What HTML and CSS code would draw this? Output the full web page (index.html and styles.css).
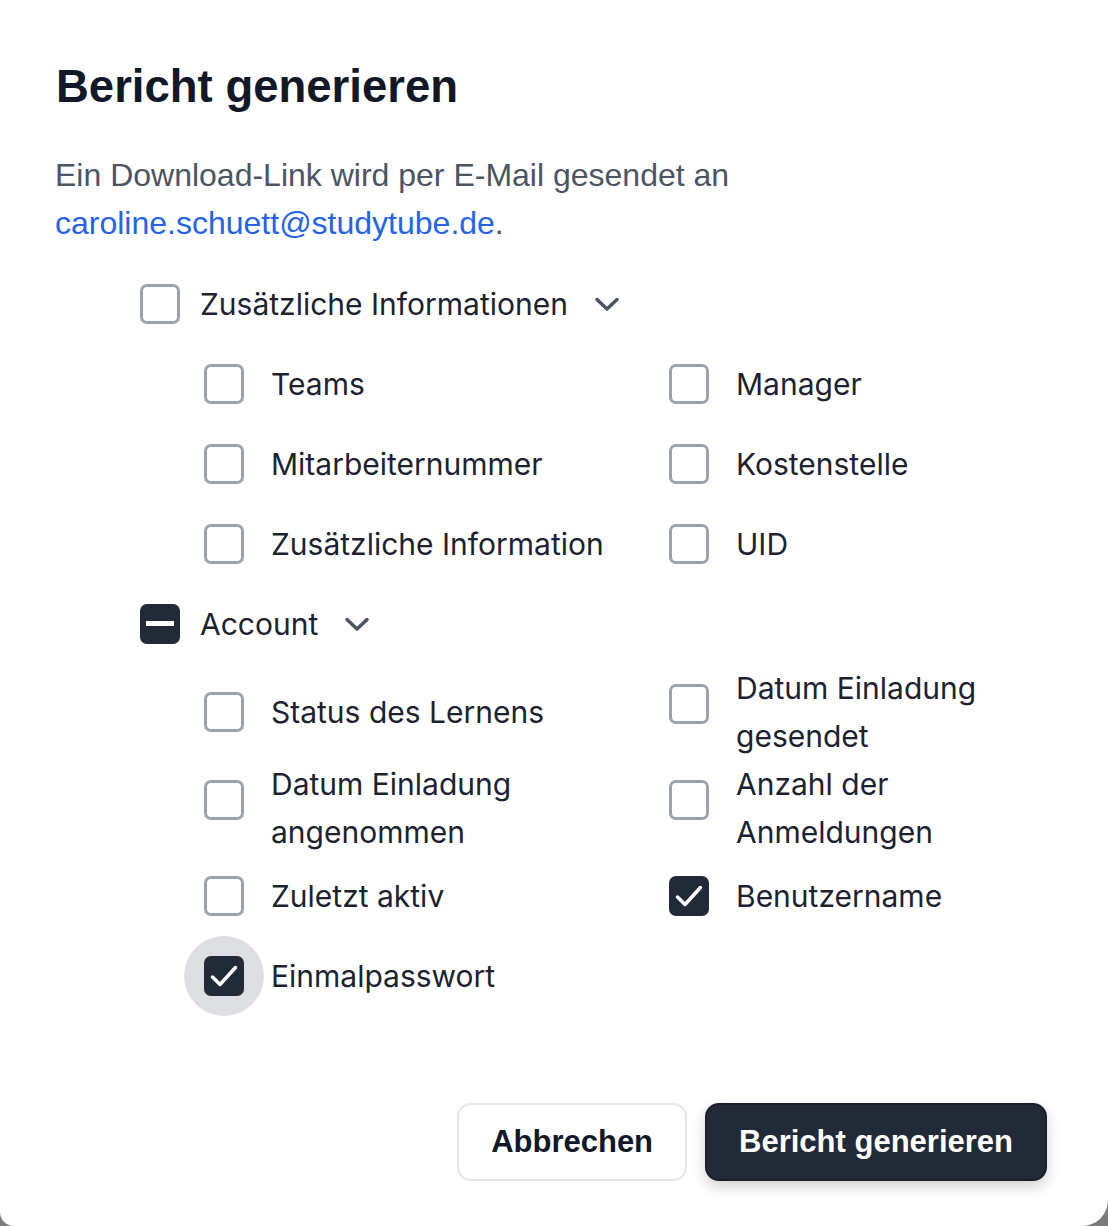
FILE: index.html
```html
<!DOCTYPE html>
<html lang="de">
<head>
    <meta charset="UTF-8">
    <meta name="viewport" content="width=device-width, initial-scale=1.0">
    <title>Bericht generieren</title>
    <link rel="stylesheet" href="styles.css">
</head>
<body>
    <div class="modal">
        <h2 class="title">Bericht generieren</h2>
        <p class="desc">Ein Download-Link wird per E-Mail gesendet an <a class="mail" href="#">caroline.schuett@studytube.de</a>.</p>

        <div class="groups">
            <!-- Zusätzliche Informationen -->
            <div class="group-head">
                <span class="cb-wrap"><span class="cb"></span></span>
                <span class="label">Zusätzliche Informationen
                    <svg class="chevron" width="26" height="16" viewBox="0 0 26 16"><path d="M3 3.5l10 9.5 10-9.5" fill="none" stroke="currentColor" stroke-width="3.5" stroke-linecap="round" stroke-linejoin="round"/></svg>
                </span>
            </div>
            <div class="items">
                <div class="item"><span class="cb-wrap"><span class="cb"></span></span><span class="label">Teams</span></div>
                <div class="item"><span class="cb-wrap"><span class="cb"></span></span><span class="label">Manager</span></div>
                <div class="item"><span class="cb-wrap"><span class="cb"></span></span><span class="label">Mitarbeiternummer</span></div>
                <div class="item"><span class="cb-wrap"><span class="cb"></span></span><span class="label">Kostenstelle</span></div>
                <div class="item"><span class="cb-wrap"><span class="cb"></span></span><span class="label">Zusätzliche Information</span></div>
                <div class="item"><span class="cb-wrap"><span class="cb"></span></span><span class="label">UID</span></div>
            </div>

            <!-- Account -->
            <div class="group-head">
                <span class="cb-wrap"><span class="cb mixed"></span></span>
                <span class="label">Account
                    <svg class="chevron" width="26" height="16" viewBox="0 0 26 16"><path d="M3 3.5l10 9.5 10-9.5" fill="none" stroke="currentColor" stroke-width="3.5" stroke-linecap="round" stroke-linejoin="round"/></svg>
                </span>
            </div>
            <div class="items">
                <div class="item"><span class="cb-wrap"><span class="cb"></span></span><span class="label">Status des Lernens</span></div>
                <div class="item"><span class="cb-wrap"><span class="cb"></span></span><span class="label">Datum Einladung gesendet</span></div>
                <div class="item"><span class="cb-wrap"><span class="cb"></span></span><span class="label">Datum Einladung angenommen</span></div>
                <div class="item"><span class="cb-wrap"><span class="cb"></span></span><span class="label">Anzahl der Anmeldungen</span></div>
                <div class="item"><span class="cb-wrap"><span class="cb"></span></span><span class="label">Zuletzt aktiv</span></div>
                <div class="item">
                    <span class="cb-wrap"><span class="cb checked"><svg width="40" height="40" viewBox="0 0 40 40"><path d="M8.5 21l7.5 7.5L31.5 11.5" fill="none" stroke="#fff" stroke-width="3.5" stroke-linecap="round" stroke-linejoin="round"/></svg></span></span>
                    <span class="label">Benutzername</span>
                </div>
                <div class="item">
                    <span class="cb-wrap hover"><span class="cb checked"><svg width="40" height="40" viewBox="0 0 40 40"><path d="M8.5 21l7.5 7.5L31.5 11.5" fill="none" stroke="#fff" stroke-width="3.5" stroke-linecap="round" stroke-linejoin="round"/></svg></span></span>
                    <span class="label">Einmalpasswort</span>
                </div>
            </div>
        </div>

        <div class="footer">
            <button class="btn btn-cancel">Abbrechen</button>
            <button class="btn btn-primary">Bericht generieren</button>
        </div>
    </div>
</body>
</html>
```

FILE: styles.css
```css
*{
    box-sizing: border-box;
}
body{
    margin: 0;
    background: #7b7b7b;
    font-family: "Liberation Sans", Arial, sans-serif;
}
.modal{
    background: #fff;
    min-height: 1226px;
    padding: 60px 61px 0 55px;
    border-radius: 0 0 26px 14px;
}
.title{
    margin: 0 0 37px 1px;
    font-size: 45.5px;
    line-height: 54px;
    font-weight: 700;
    color: #111827;
}
.desc{
    margin: 0;
    font-size: 32px;
    line-height: 48px;
    color: #4b5563;
}
.mail{
    color: #2563eb;
    text-decoration: none;
}

/* checkbox list */
.groups{
    margin: 17px 0 0 65px;
    font-family: Inter, "Noto Sans", sans-serif;
    font-size: 30px;
    color: #1c2230;
}
.group-head{
    display: flex;
    align-items: center;
    height: 80px;
}
.group-head .label{
    display: flex;
    align-items: center;
}
.chevron{
    margin-left: 26px;
    color: #4b5563;
}
.items{
    display: grid;
    grid-template-columns: 465px 1fr;
    align-items: center;
    margin-left: 64px;
}
.item{
    display: flex;
    align-items: flex-start;
}
.item .label{
    display: flex;
    align-items: center;
    min-height: 80px;
    margin-left: 7px;
    line-height: 48px;
}
.cb-wrap{
    flex: none;
    width: 80px;
    height: 80px;
    display: flex;
    align-items: center;
    justify-content: center;
    border-radius: 50%;
}
.cb-wrap.hover{
    background: #dedfe2;
}
.cb{
    width: 40px;
    height: 40px;
    border: 3px solid #9ca3af;
    border-radius: 7px;
    background: #fff;
    position: relative;
}
.cb.checked{
    border: none;
    background: #232a37;
}
.cb.checked svg{
    display: block;
}
.cb.mixed{
    border: none;
    background: #232a37;
}
.cb.mixed::after{
    content: "";
    position: absolute;
    left: 6px;
    right: 6px;
    top: 17px;
    height: 5px;
    background: #fff;
}

/* buttons */
.footer{
    display: flex;
    justify-content: flex-end;
    gap: 18px;
    margin-top: 87px;
}
.btn{
    height: 78px;
    padding: 0 32px;
    border-radius: 14px;
    font-family: "Liberation Sans", Arial, sans-serif;
    font-size: 31px;
    font-weight: 700;
    cursor: pointer;
}
.btn-cancel{
    background: #fff;
    border: 2px solid #e5e7eb;
    color: #111827;
}
.btn-primary{
    background: #232a37;
    border: 2px solid #1a202b;
    color: #fff;
    box-shadow: 0 6px 14px rgba(0, 0, 0, 0.18);
}
```
